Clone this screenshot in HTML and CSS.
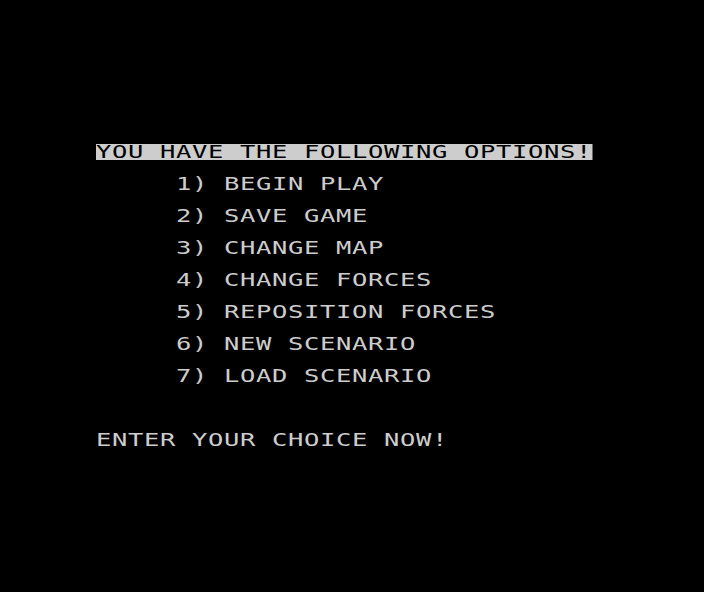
FILE: index.html
```html
<!DOCTYPE html>
<html lang="en">
<head>
  <meta charset="UTF-8">
  <meta name="viewport" content="width=device-width, initial-scale=1.0">
  <title>Options</title>
  <link rel="stylesheet" href="styles.css">
</head>
<body>
  <div class="screen">
    <div class="line"><span class="inverse">YOU HAVE THE FOLLOWING OPTIONS!</span></div>
    <div class="line">     1) BEGIN PLAY</div>
    <div class="line">     2) SAVE GAME</div>
    <div class="line">     3) CHANGE MAP</div>
    <div class="line">     4) CHANGE FORCES</div>
    <div class="line">     5) REPOSITION FORCES</div>
    <div class="line">     6) NEW SCENARIO</div>
    <div class="line">     7) LOAD SCENARIO</div>
    <div class="line"></div>
    <div class="line">ENTER YOUR CHOICE NOW!</div>
  </div>
</body>
</html>
```

FILE: styles.css
```css
html, body {
  margin: 0;
  padding: 0;
  background-color: #000;
}

.screen {
  width: 704px;
  height: 592px;
  box-sizing: border-box;
  padding: 144px 0 0 96px;
  background-color: #000;
  overflow: hidden;
}

/* each text row is one 16px character row, followed by an empty one */
.line {
  height: 16px;
  margin-bottom: 16px;
  font-family: "DejaVu Sans Mono", monospace;
  font-size: 17px;
  line-height: 16px;
  letter-spacing: 0.43px;
  white-space: pre;
  color: #cdcdcd;
  transform: scaleX(1.5);
  transform-origin: 0 0;
}

.inverse {
  display: inline-block;
  height: 16px;
  background-color: #cdcdcd;
  color: #000;
}
```
